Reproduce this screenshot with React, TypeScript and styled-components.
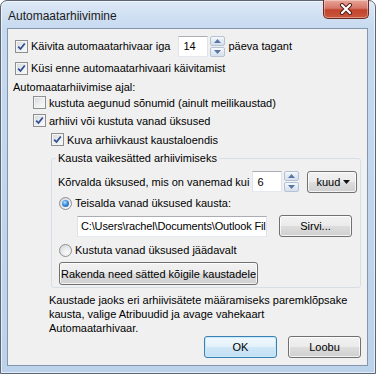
import React from 'react';
import styled, { createGlobalStyle } from 'styled-components';

const GlobalStyle = createGlobalStyle`
  html, body {
    margin: 0;
    padding: 0;
    background: #ffffff;
  }
  body {
    font-family: "Liberation Sans", Arial, sans-serif;
    font-size: 11px;
    color: #000;
  }
  * {
    box-sizing: border-box;
  }
`;

const Window = styled.div`
  width: 376px;
  height: 374px;
  display: flex;
  flex-direction: column;
  border: 1px solid #5b6573;
  border-radius: 7px 7px 0 0;
  background: linear-gradient(180deg, #dce8f6 0, #c6d9ef 28px, #bcd2eb 100%);
  box-shadow: inset 0 0 0 1px rgba(255, 255, 255, 0.6);
  padding: 0 7px 7px 6px;
`;

const TitleBar = styled.div`
  height: 27px;
  display: flex;
  justify-content: space-between;
  align-items: flex-start;
`;

const Title = styled.div`
  font-size: 12px;
  line-height: 14px;
  margin-top: 8px;
  margin-left: 1px;
  color: #1b1b1b;
`;

const CloseButton = styled.div`
  width: 46px;
  height: 19px;
  margin-top: -1px;
  margin-right: -1px;
  border: 1px solid #6d2a20;
  border-top: none;
  border-radius: 0 0 5px 5px;
  background: linear-gradient(180deg, #e8a597 0, #d7786a 45%, #c3432c 55%, #c9583f 100%);
  box-shadow: inset 0 0 0 1px rgba(255, 255, 255, 0.35);
  display: flex;
  align-items: center;
  justify-content: center;
`;

const Client = styled.div`
  flex: 1;
  display: flex;
  flex-direction: column;
  background: #f0f0f0;
  border: 1px solid #8296ad;
  padding-top: 6px;
`;

const Row = styled.div<{ $indent: number; $h: number; $mt?: number }>`
  display: flex;
  align-items: center;
  height: ${(p) => p.$h}px;
  padding-left: ${(p) => p.$indent}px;
  margin-top: ${(p) => p.$mt ?? 0}px;
  white-space: nowrap;
`;

const Text = styled.span<{ $ml?: number }>`
  margin-left: ${(p) => p.$ml ?? 0}px;
  line-height: 14px;
`;

const Box = styled.span`
  width: 13px;
  height: 13px;
  flex: none;
  border: 1px solid #8e8f8f;
  background: linear-gradient(135deg, #d4d7dc 0, #eceef0 55%, #fbfbfb 100%);
  box-shadow: inset 0 0 0 1px #f4f4f4;
  display: flex;
  align-items: center;
  justify-content: center;
`;

const RadioCircle = styled.span`
  width: 13px;
  height: 13px;
  flex: none;
  border-radius: 50%;
  border: 1px solid #8e8f8f;
  background: radial-gradient(circle at 65% 70%, #fbfbfb 0, #e2e4e8 60%, #c9ccd1 100%);
  display: flex;
  align-items: center;
  justify-content: center;
`;

const RadioDot = styled.span`
  width: 7px;
  height: 7px;
  border-radius: 50%;
  background: radial-gradient(circle at 40% 35%, #bfe1fb 0, #3c8ddc 45%, #164f96 100%);
`;

const TextBox = styled.div<{ $w: number; $ml?: number; $tight?: boolean }>`
  width: ${(p) => p.$w}px;
  height: 21px;
  margin-left: ${(p) => p.$ml ?? 0}px;
  background: #fff;
  border: 1px solid #e2e3ea;
  border-top-color: #abadb3;
  border-bottom-color: #e3e9ef;
  padding-left: ${(p) => (p.$tight ? 3 : 4)}px;
  letter-spacing: ${(p) => (p.$tight ? '-0.15px' : 'normal')};
  display: flex;
  align-items: center;
  overflow: hidden;
  white-space: nowrap;
  flex: none;
`;

const Spin = styled.div`
  width: 15px;
  height: 21px;
  margin-left: 2px;
  display: flex;
  flex-direction: column;
  gap: 1px;
  flex: none;
`;

const SpinHalf = styled.div`
  flex: 1;
  border: 1px solid #b5c3d4;
  border-radius: 2px;
  background: linear-gradient(180deg, #f6f9fc 0, #e3eaf3 50%, #d6e0ec 100%);
  display: flex;
  align-items: center;
  justify-content: center;
`;

const Button = styled.div<{ $w: number; $h?: number; $ml?: number }>`
  width: ${(p) => p.$w}px;
  height: ${(p) => p.$h ?? 23}px;
  margin-left: ${(p) => p.$ml ?? 0}px;
  border: 1px solid #707070;
  border-radius: 3px;
  background: linear-gradient(180deg, #f2f2f2 0, #ebebeb 48%, #dddddd 52%, #cfcfcf 100%);
  box-shadow: inset 0 0 0 1px rgba(255, 255, 255, 0.75);
  display: flex;
  align-items: center;
  justify-content: center;
  flex: none;
`;

const DefaultButton = styled(Button)`
  border-color: #3c7fb1;
  background: linear-gradient(180deg, #f1f8fd 0, #e3f1fa 48%, #cfe7f6 52%, #c2e0f4 100%);
  box-shadow: inset 0 0 0 1px #c6e9fb;
`;

const Dropdown = styled(Button)`
  justify-content: space-between;
  padding: 0 6px 0 8px;
`;

const GroupBox = styled.fieldset`
  margin: 1px 6px 0 43px;
  padding: 0 6px 2px 6px;
  border: 1px solid #d5dfe5;
  border-radius: 3px;
  min-width: 0;
`;

const Legend = styled.legend`
  padding: 0 2px;
  margin-left: -2px;
  line-height: 16px;
`;

const Note = styled.p`
  margin: 5px 0 0 41px;
  line-height: 14px;
`;

const Footer = styled.div`
  display: flex;
  justify-content: flex-end;
  gap: 11px;
  margin-top: 1px;
  padding-right: 6px;
`;

const Check = ({ on }: { on: boolean }) => (
  <Box>
    {on && (
      <svg width="9" height="9" viewBox="0 0 9 9">
        <path d="M1.2 4.6 L3.5 7 L7.8 1.5" fill="none" stroke="#2f4f95" strokeWidth="1.8" />
      </svg>
    )}
  </Box>
);

const Radio = ({ on }: { on: boolean }) => <RadioCircle>{on && <RadioDot />}</RadioCircle>;

const Arrow = ({ up, color = '#5b76a6' }: { up: boolean; color?: string }) => (
  <svg width="7" height="4" viewBox="0 0 7 4">
    <path d={up ? 'M0 4 L3.5 0 L7 4 Z' : 'M0 0 L7 0 L3.5 4 Z'} fill={color} />
  </svg>
);

const Spinner = () => (
  <Spin>
    <SpinHalf>
      <Arrow up />
    </SpinHalf>
    <SpinHalf>
      <Arrow up={false} />
    </SpinHalf>
  </Spin>
);

const App: React.FC = () => (
  <>
    <GlobalStyle />
    <Window>
      <TitleBar>
        <Title>Automaatarhiivimine</Title>
        <CloseButton>
          <svg width="14" height="12" viewBox="0 0 14 12">
            <path d="M3 2 L11 10 M11 2 L3 10" stroke="#4a1a12" strokeWidth="4" strokeLinecap="round" />
            <path d="M3 2 L11 10 M11 2 L3 10" stroke="#ffffff" strokeWidth="2.2" strokeLinecap="round" />
          </svg>
        </CloseButton>
      </TitleBar>
      <Client>
        <Row $indent={7} $h={22}>
          <Check on />
          <Text $ml={3}>Käivita automaatarhivaar iga</Text>
          <TextBox $w={30} $ml={8}>14</TextBox>
          <Spinner />
          <Text $ml={3}>päeva tagant</Text>
        </Row>
        <Row $indent={7} $h={22}>
          <Check on />
          <Text $ml={3}>Küsi enne automaatarhivaari käivitamist</Text>
        </Row>
        <Row $indent={5} $h={15}>
          <Text>Automaatarhiivimise ajal:</Text>
        </Row>
        <Row $indent={25} $h={17}>
          <Check on={false} />
          <Text $ml={3}>kustuta aegunud sõnumid (ainult meilikaustad)</Text>
        </Row>
        <Row $indent={25} $h={19}>
          <Check on />
          <Text $ml={3}>arhiivi või kustuta vanad üksused</Text>
        </Row>
        <Row $indent={43} $h={19}>
          <Check on />
          <Text $ml={3}>Kuva arhiivkaust kaustaloendis</Text>
        </Row>
        <GroupBox>
          <Legend>Kausta vaikesätted arhiivimiseks</Legend>
          <Row $indent={0} $h={23} $mt={4}>
            <Text>Kõrvalda üksused, mis on vanemad kui</Text>
            <TextBox $w={30} $ml={3}>6</TextBox>
            <Spinner />
            <Dropdown $w={50} $h={22} $ml={8}>
              <span>kuud</span>
              <Arrow up={false} color="#111" />
            </Dropdown>
          </Row>
          <Row $indent={1} $h={20}>
            <Radio on />
            <Text $ml={3}>Teisalda vanad üksused kausta:</Text>
          </Row>
          <Row $indent={19} $h={22} $mt={2}>
            <TextBox $w={190} $tight>C:\Users\rachel\Documents\Outlook Fil</TextBox>
            <Button $w={73} $h={22} $ml={12}>
              Sirvi...
            </Button>
          </Row>
          <Row $indent={1} $h={22} $mt={2}>
            <Radio on={false} />
            <Text $ml={3}>Kustuta vanad üksused jäädavalt</Text>
          </Row>
          <Row $indent={1} $h={23} $mt={1}>
            <Button $w={199}>Rakenda need sätted kõigile kaustadele</Button>
          </Row>
        </GroupBox>
        <Note>
          Kaustade jaoks eri arhiivisätete määramiseks paremklõpsake
          <br />
          kausta, valige Atribuudid ja avage vahekaart
          <br />
          Automaatarhivaar.
        </Note>
        <Footer>
          <DefaultButton $w={73} $h={22}>
            OK
          </DefaultButton>
          <Button $w={73} $h={22}>
            Loobu
          </Button>
        </Footer>
      </Client>
    </Window>
  </>
);

export default App;
